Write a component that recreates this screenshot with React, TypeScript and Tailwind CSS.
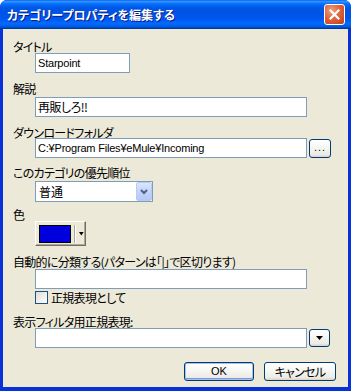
import React from "react"

const jp = "font-['Noto_Sans_CJK_JP',sans-serif] [font-feature-settings:'palt']"
const latin = "font-['Liberation_Sans','Noto_Sans_CJK_JP',sans-serif]"
const label = `${jp} text-[12px] leading-[13px] tracking-[-0.7px] whitespace-nowrap`

function Field({ width, children }: { width: string; children?: React.ReactNode }) {
  return (
    <div
      className={`${width} h-[20px] border border-[#7F9DB9] bg-white px-[2px] flex items-center text-[11px] text-black ${latin} leading-none whitespace-nowrap overflow-hidden tracking-[-0.2px]`}
    >
      {children}
    </div>
  )
}

function XpButton({ className, children, isDefault }: { className: string; children?: React.ReactNode; isDefault?: boolean }) {
  return (
    <div
      className={`${className} flex items-center justify-center rounded-[3px] border border-[#003C74] bg-[linear-gradient(180deg,#FFFFFF_0%,#F6F6F3_45%,#ECEBE5_85%,#D8D2C6_100%)] ${
        isDefault ? "shadow-[inset_0_0_0_1px_#A9C0EC,inset_0_-1px_0_1px_#7D98DD]" : ""
      }`}
    >
      {children}
    </div>
  )
}

export default function App() {
  return (
    <div className="w-[351px] h-[391px] flex flex-col bg-[#0831D9] rounded-t-[7px] overflow-hidden select-none">
      {/* title bar */}
      <div className="h-[29px] shrink-0 flex items-center justify-between pl-[7px] pr-[6px] bg-[linear-gradient(180deg,#0058EE_0%,#3A93FF_4%,#288EFF_7%,#127DFF_10%,#036FFC_14%,#0262EE_20%,#0057E5_28%,#0054E3_36%,#0055EB_60%,#005BF5_70%,#026AFE_80%,#0062EF_88%,#0052D6_94%,#0040AB_97%,#003092_100%)]">
        <span className={`${jp} text-[12px] font-bold text-white leading-none [text-shadow:1px_1px_0_#0A1883]`}>
          カテゴリープロパティを編集する
        </span>
        <div className="w-[21px] h-[21px] rounded-[3px] border border-white bg-[radial-gradient(circle_at_35%_30%,#F0A080_0%,#E0643C_45%,#C23B14_100%)] flex items-center justify-center">
          <svg width="11" height="11" viewBox="0 0 11 11">
            <path d="M1.5 1.5 L9.5 9.5 M9.5 1.5 L1.5 9.5" stroke="white" strokeWidth="2.2" strokeLinecap="square" />
          </svg>
        </div>
      </div>

      {/* body */}
      <div className="flex-1 mx-[3px] mb-[4px] bg-[#ECE9D8] pl-[10px] pt-[11px] flex flex-col text-black">
        <div className={label}>タイトル</div>
        <div className="ml-[22px]">
          <Field width="w-[95px]">Starpoint</Field>
        </div>

        <div className={`${label} mt-[9px]`}>解説</div>
        <div className="ml-[22px] mt-[2px]">
          <Field width="w-[272px]">
            <span className={`${jp} text-[12px] tracking-[-0.5px]`}>再販しろ!!</span>
          </Field>
        </div>

        <div className={`${label} mt-[9px]`}>ダウンロードフォルダ</div>
        <div className="ml-[22px] mt-[-1px] flex items-start gap-[2px]">
          <Field width="w-[272px]">C:¥Program Files¥eMule¥Incoming</Field>
          <XpButton className="w-[22px] h-[19px] mt-[1px]">
            <span className={`${latin} text-[11px] leading-none tracking-[1px] pb-[2px]`}>...</span>
          </XpButton>
        </div>

        <div className={`${label} mt-[8px]`}>このカテゴリの優先順位</div>
        <div className="ml-[22px] mt-[2px]">
          <div className="w-[118px] h-[21px] border border-[#7F9DB9] bg-white flex items-center">
            <span className={`${jp} text-[12px] flex-1 pl-[3px] leading-none`}>普通</span>
            <div className="w-[16px] h-[19px] border border-[#B9CBF3] rounded-[2px] bg-[linear-gradient(180deg,#DCE6FC_0%,#C3D4FB_50%,#B4C8F6_100%)] flex items-center justify-center">
              <svg width="8" height="6" viewBox="0 0 8 6">
                <path d="M1 1 L4 4 L7 1" stroke="#4D6185" strokeWidth="2" fill="none" />
              </svg>
            </div>
          </div>
        </div>

        <div className={`${label} mt-[6px]`}>色</div>
        <div className="ml-[22px]">
          <div className="w-[51px] h-[25px] bg-[#ECE9D8] border border-t-white border-l-white border-r-[#716F64] border-b-[#716F64] shadow-[inset_-1px_-1px_0_#ACA899] flex items-center pl-[3px]">
            <div className="w-[34px] h-[18px] border border-black bg-[#0000DC]" />
            <div className="w-[2px] h-[18px] ml-[3px] border-l border-[#ACA899] border-r border-r-white" />
            <svg width="7" height="4" viewBox="0 0 7 4" className="ml-[2px]">
              <path d="M1 0 L6 0 L3.5 3.5 Z" fill="black" />
            </svg>
          </div>
        </div>

        <div className={`${label} mt-[9px]`}>自動的に分類する(パターンは「|」で区切ります)</div>
        <div className="ml-[22px] mt-[1px]">
          <Field width="w-[272px]" />
        </div>
        <div className="ml-[22px] mt-[2px] flex items-center gap-[3px]">
          <div className="w-[13px] h-[13px] border border-[#1C5180] bg-[linear-gradient(135deg,#DCDCD7_0%,#F2F2EE_60%,#FFFFFF_100%)]" />
          <span className={label}>正規表現として</span>
        </div>

        <div className={`${label} mt-[11px]`}>表示フィルタ用正規表現:</div>
        <div className="ml-[22px] flex items-start gap-[2px]">
          <Field width="w-[272px]" />
          <XpButton className="w-[21px] h-[18px] mt-[1px]">
            <svg width="7" height="4" viewBox="0 0 7 4">
              <path d="M0 0 L7 0 L3.5 4 Z" fill="black" />
            </svg>
          </XpButton>
        </div>

        <div className="mt-[14px] flex justify-end gap-[10px] pr-[12px]">
          <XpButton className="w-[70px] h-[19px]" isDefault>
            <span className={`${latin} text-[11px] leading-none`}>OK</span>
          </XpButton>
          <XpButton className="w-[72px] h-[19px]">
            <span className={`${jp} text-[12px] leading-none tracking-[-0.7px]`}>キャンセル</span>
          </XpButton>
        </div>
      </div>
    </div>
  )
}
